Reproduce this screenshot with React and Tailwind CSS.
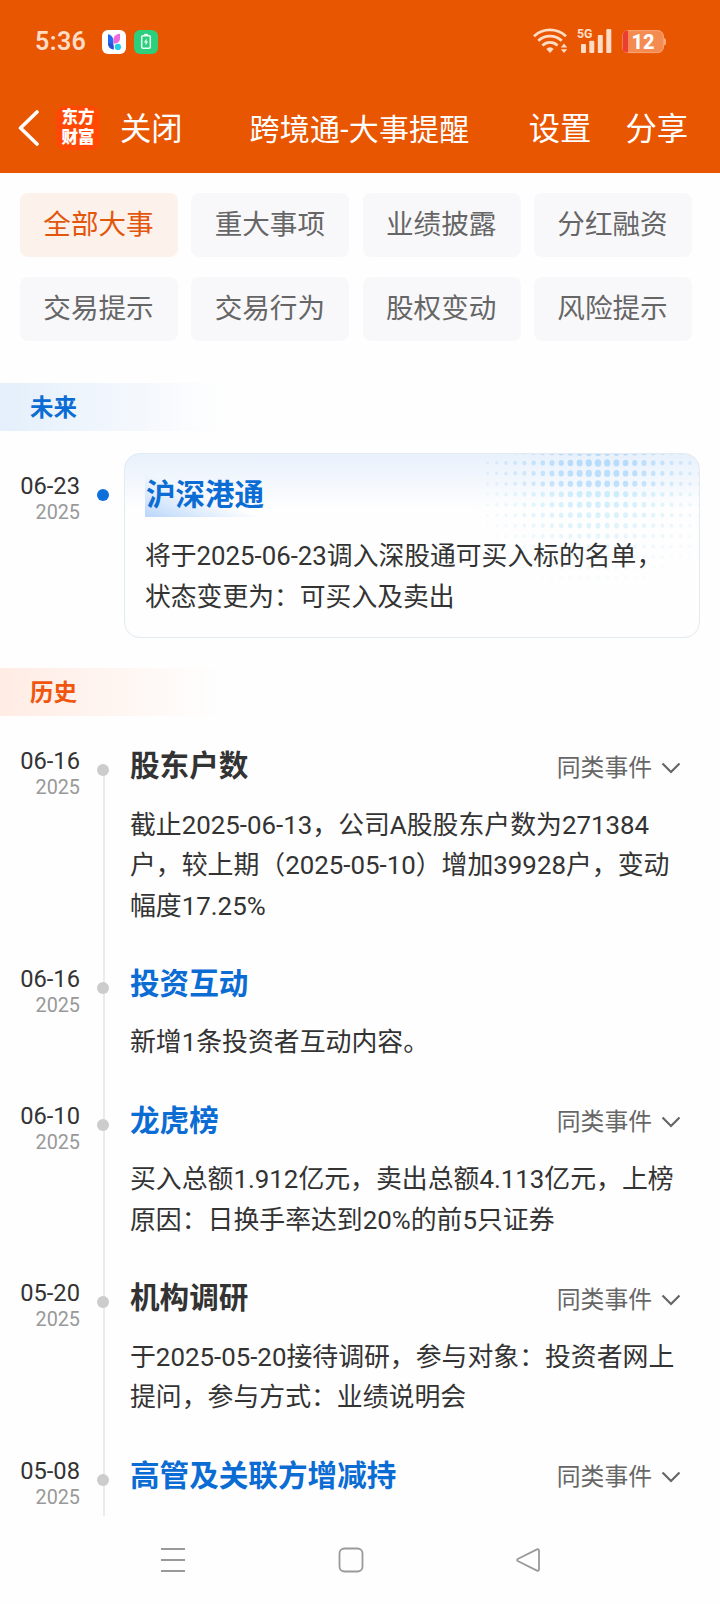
import { useState } from "react";

const tabs = [
  "全部大事",
  "重大事项",
  "业绩披露",
  "分红融资",
  "交易提示",
  "交易行为",
  "股权变动",
  "风险提示",
];

const history = [
  {
    date: "06-16",
    year: "2025",
    title: "股东户数",
    more: true,
    lines: [
      "截止2025-06-13，公司A股股东户数为271384",
      "户，较上期（2025-05-10）增加39928户，变动",
      "幅度17.25%",
    ],
  },
  {
    date: "06-16",
    year: "2025",
    title: "投资互动",
    link: true,
    lines: ["新增1条投资者互动内容。"],
  },
  {
    date: "06-10",
    year: "2025",
    title: "龙虎榜",
    link: true,
    more: true,
    lines: [
      "买入总额1.912亿元，卖出总额4.113亿元，上榜",
      "原因：日换手率达到20%的前5只证券",
    ],
  },
  {
    date: "05-20",
    year: "2025",
    title: "机构调研",
    more: true,
    lines: [
      "于2025-05-20接待调研，参与对象：投资者网上",
      "提问，参与方式：业绩说明会",
    ],
  },
  {
    date: "05-08",
    year: "2025",
    title: "高管及关联方增减持",
    link: true,
    more: true,
    lines: [],
  },
];

function StatusBar() {
  return (
    <div className="flex h-[82px] items-center pr-[54px] pl-[35px] text-[#ffdcc6]">
      <span className="mt-[2px] w-[67px] text-[25px] leading-[30px] font-semibold tracking-[0.4px]">
        5:36
      </span>
      <svg width="24" height="24" viewBox="0 0 24 24" className="mt-[2px]">
        <rect width="24" height="24" rx="6" fill="#fff" />
        <path d="M6 4.200c3.400.6 5.400 3 5.400 7.300v8C8 18.800 6 16.500 6 13z" fill="#2468ee" />
        <path d="M18 3.800v4.400c0 3.300-2.200 5.300-6.400 5.500V9.500c0-3.200 2.200-5.300 6.400-5.700z" fill="#ee69de" />
        <path d="M6 13.500c2.600-.5 4.600.2 5.700 2.300v3.700C8.300 19 6.200 17 6 13.500z" fill="#2b4fd0" />
        <circle cx="15.900" cy="16.900" r="3.100" fill="#1fd0ea" />
      </svg>
      <svg width="24" height="24" viewBox="0 0 24 24" className="mt-[2px] ml-2">
        <rect width="24" height="24" rx="6" fill="#2bcf7c" />
        <rect x="7.700" y="5.700" width="8.600" height="12.600" rx="1.200" fill="none" stroke="#e9fff3" strokeWidth="1.500" />
        <path d="M10 4.600h4" stroke="#e9fff3" strokeWidth="1.500" />
        <path d="M12.600 8.500l-2.700 4h1.700v3l2.600-4h-1.600z" fill="#e9fff3" />
      </svg>

      <svg width="36" height="26" viewBox="0 0 36 26" className="ml-auto" fill="none" stroke="#ffdcc6">
        <path d="M1 8.200a23.500 23.500 0 0 1 32 0" strokeWidth="2.700" />
        <path d="M5.200 12.800a17.500 17.500 0 0 1 23.600 0" strokeWidth="2.700" />
        <path d="M9.400 17.400a11 11 0 0 1 15.200 0" strokeWidth="2.700" />
        <path d="M13.300 21a5.600 5.600 0 0 1 7.400 0l-3.700 4z" fill="#ffdcc6" stroke="none" />
        <path d="M31 15.600l3.200 3.900h-6.400zM31 25l-3.200-3.700h6.400z" fill="#ffdcc6" stroke="none" />
      </svg>
      <svg width="40" height="34" viewBox="-4 -4 40 34" className="ml-[4px]" fill="#ffdcc6">
        <text x="0" y="10" fontSize="13.500" fontWeight="700" textLength="15.500" lengthAdjust="spacingAndGlyphs">
          5G
        </text>
        <rect x="4" y="16" width="5" height="9" rx="1" />
        <rect x="12.300" y="12.800" width="5" height="12.200" rx="1" />
        <rect x="20.800" y="7" width="5" height="18" rx="1" />
        <rect x="29.300" y="1" width="5" height="24" rx="1" />
      </svg>
      <svg width="44" height="24" viewBox="0 0 44 24" className="mt-[1px] ml-[9px]">
        <rect x="0.600" y="0.600" width="40.800" height="22" rx="5.500" fill="#f48b50" stroke="#f9a678" />
        <path d="M6 .6H5.800A5 5 0 0 0 .6 5.800v11.600a5 5 0 0 0 5.200 5.200H6z" fill="#ea3f30" />
        <path d="M42 8c1.300.3 2 1.200 2 2.300v2.900c0 1.100-.7 2-2 2.300z" fill="#f9a678" />
        <text x="21" y="19" fontSize="20" fontWeight="800" textAnchor="middle" fill="#fff">
          12
        </text>
      </svg>
    </div>
  );
}

function Header() {
  return (
    <header className="h-[173px] shrink-0 bg-[#e95602]">
      <StatusBar />
      <div className="flex h-[91px] items-center pr-[32px] pl-[18px] text-[31.300px] leading-[44px] text-white">
        <svg width="22" height="38" viewBox="0 0 22 38" fill="none" stroke="#fff" strokeWidth="3.600" strokeLinecap="round" strokeLinejoin="round">
          <path d="M19 3L2.500 19 19 35" />
        </svg>
        <div className="ml-4 h-11 w-11 shrink-0 rounded-[9px] bg-[#ff4803] pt-[2px] text-center text-[16.500px] leading-[20px] font-black">
          <div>东方</div>
          <div>财富</div>
        </div>
        <span className="mt-1 ml-[20px] shrink-0">关闭</span>
        <h1 className="mt-1 ml-[67px] shrink-0 text-[30px] tracking-[0.200px]">跨境通-大事提醒</h1>
        <span className="mt-1 ml-auto shrink-0">设置</span>
        <span className="mt-1 ml-[34px] shrink-0">分享</span>
      </div>
    </header>
  );
}

// Halftone dots in the card's top right corner
function DotPattern() {
  const dots = [];
  for (let row = 0; row < 14; row++) {
    for (let col = 0; col < 25; col++) {
      const dx = (col - 13) / 14.5;
      const dy = (row - 1) / 17;
      const strength = 1 - Math.sqrt(dx * dx + dy * dy);
      if (strength > 0.02) {
        dots.push(
          <ellipse
            key={`${row}-${col}`}
            cx={col * 9.2 - 0.6}
            cy={row * 10.45 - 1.5}
            rx={1 + strength * 2.3}
            ry={1.1 + strength * 2.7}
            fill={row < 4 ? "#b7dcfb" : "#bfe9fb"}
            opacity={Math.max(0, 1.1 - row / 13) * Math.min(1, 0.15 + strength * 1.1)}
          />
        );
      }
    }
  }
  return (
    <svg width="220" height="150" className="absolute top-0 right-0">
      {dots}
    </svg>
  );
}

function DateLabel({ date, year }) {
  return (
    <div className="w-20 shrink-0 text-right">
      <div className="text-[23.700px] leading-[31px] text-[#333]">{date}</div>
      <div className="text-[19.800px] leading-[22px] text-[#999]">{year}</div>
    </div>
  );
}

function HistoryItem({ item, first }) {
  const [open, setOpen] = useState(false);

  return (
    <div className="flex">
      <DateLabel date={item.date} year={item.year} />
      <div className="relative ml-[17px] flex w-3 shrink-0 justify-center">
        <div className={first ? "ml-[2px] mt-[20px] w-[2px] bg-[#ebebeb]" : "ml-[2px] w-[2px] bg-[#ebebeb]"} />
        <div className="absolute top-[18px] left-0 h-3 w-3 rounded-full bg-[#ccc]" />
      </div>
      <div className="ml-[21px] flex-1 pb-[37.800px]">
        <div className="flex h-10 items-center justify-between pr-[39px]">
          <h2
            className={
              item.link
                ? "text-[29.600px] leading-[40px] font-bold text-[#0b6cd4]"
                : "text-[29.600px] leading-[40px] font-bold text-[#333]"
            }
          >
            {item.title}
          </h2>
          {item.more && (
            <button
              onClick={() => setOpen(!open)}
              className="mt-[3px] flex items-center text-[23.800px] leading-[34px] text-[#666]"
            >
              同类事件
              <svg width="20" height="12" viewBox="0 0 20 12" className="ml-[9px]" fill="none" stroke="#666" strokeWidth="2.200">
                <path d={open ? "M1.500 10.500L10 2l8.500 8.500" : "M1.500 1.500L10 10l8.500-8.500"} />
              </svg>
            </button>
          )}
        </div>
        <div className="mt-[18.600px] text-[25.870px] leading-[40.500px] whitespace-nowrap text-[#333]">
          {item.lines.map((line) => (
            <p key={line}>{line}</p>
          ))}
        </div>
      </div>
    </div>
  );
}

function NavBar() {
  return (
    <nav className="flex h-[88px] shrink-0 items-center pl-[161px]">
      <svg width="24" height="26" viewBox="0 0 24 26" stroke="#999" strokeWidth="1.800">
        <path d="M0 2h24M0 13h24M0 24h24" />
      </svg>
      <svg width="26" height="26" viewBox="0 0 26 26" className="ml-[153px]" fill="none" stroke="#999" strokeWidth="1.800">
        <rect x="1.500" y="1.500" width="23" height="23" rx="5" />
      </svg>
      <svg width="26" height="26" viewBox="0 0 26 26" className="ml-[151px]" fill="none" stroke="#999" strokeWidth="1.800" strokeLinejoin="round">
        <path d="M22 2.400L3.200 11.700q-2.200 1.300 0 2.600L22 23.600q2 .6 2-1.400V3.800q0-2-2-1.400z" />
      </svg>
    </nav>
  );
}

function App() {
  const [active, setActive] = useState("全部大事");

  return (
    <div className="flex h-[1604px] w-[720px] flex-col overflow-hidden bg-[#fefefe] font-[Roboto,'Noto_Sans_CJK_SC',sans-serif]">
      <Header />

      <main className="flex-1 overflow-hidden">
        <div className="grid grid-cols-4 gap-x-[13.300px] gap-y-5 pt-5 pr-7 pl-5">
          {tabs.map((tab) => (
            <button
              key={tab}
              onClick={() => setActive(tab)}
              className={
                tab === active
                  ? "h-16 rounded-lg bg-[#fdf1ec] pr-px text-[27.600px] leading-[40px] text-[#e2570c]"
                  : "h-16 rounded-lg bg-[#f8f8fa] pr-px text-[27.600px] leading-[40px] text-[#666]"
              }
            >
              {tab}
            </button>
          ))}
        </div>

        <div className="mt-[42px] h-12 w-[222px] bg-linear-to-r from-[#e4effb] to-[#fefefe] pl-[30px] text-[23.500px] leading-[50px] font-bold text-[#0b6cd4]">
          未来
        </div>

        <div className="mt-[22px] flex">
          <div className="pt-[18px]">
            <DateLabel date="06-23" year="2025" />
          </div>
          <div className="mt-[36px] ml-[17px] h-3 w-3 shrink-0 rounded-full bg-[#0f70dc]" />
          <div className="relative ml-[15px] h-[185px] w-[576px] overflow-hidden rounded-2xl border border-[#e1ebf0] bg-linear-to-b from-[#e8f1fc] to-[#fefefe] to-30% pt-[19px] pl-5">
            <DotPattern />
            <div className="relative">
              <h2 className="h-11 w-[118px] bg-linear-to-tr from-[#b9d6fa] to-transparent to-50% pl-px text-[29.500px] leading-[44px] font-bold whitespace-nowrap text-[#0b6cd4]">
                沪深港通
              </h2>
              <div className="mt-[19px] text-[25.800px] leading-[40.500px] whitespace-nowrap text-[#333]">
                <p>将于2025-06-23调入深股通可买入标的名单，</p>
                <p>状态变更为：可买入及卖出</p>
              </div>
            </div>
          </div>
        </div>

        <div className="mt-[30px] h-12 w-[222px] bg-linear-to-r from-[#ffece4] to-[#fefefe] pl-[30px] text-[23.500px] leading-[50px] font-bold text-[#f0560e]">
          历史
        </div>

        <div className="mt-[30px]">
          {history.map((item, i) => (
            <HistoryItem key={i} item={item} first={i === 0} />
          ))}
        </div>
      </main>

      <NavBar />
    </div>
  );
}

export default App;
